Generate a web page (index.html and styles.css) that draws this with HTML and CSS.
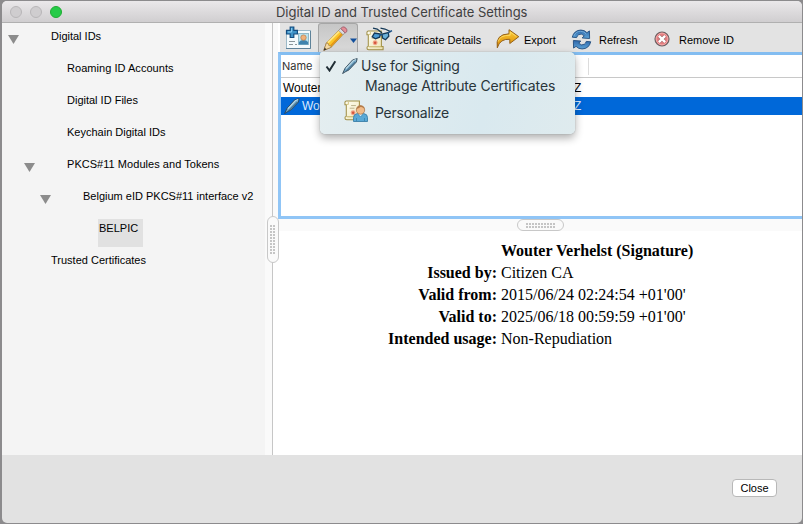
FILE: index.html
```html
<!DOCTYPE html>
<html lang="en">
<head>
<meta charset="utf-8">
<title>Digital ID and Trusted Certificate Settings</title>
<link rel="stylesheet" href="styles.css">
</head>
<body>
<svg class="defs" width="0" height="0">
  <defs>
    <linearGradient id="gold" x1="0" y1="0" x2="0" y2="1"><stop offset="0" stop-color="#ffcf35"/><stop offset="1" stop-color="#d58508"/></linearGradient>
    <linearGradient id="blue" x1="0" y1="0" x2="0" y2="1"><stop offset="0" stop-color="#2f68ac"/><stop offset="1" stop-color="#5da3d6"/></linearGradient>
    <linearGradient id="paper" x1="0" y1="0" x2="1" y2="1"><stop offset="0" stop-color="#fffef2"/><stop offset="1" stop-color="#efe5b4"/></linearGradient>
    <symbol id="pen" viewBox="0 0 16 16">
      <path d="M.6 15.6 3 10.3 10.6 1.9 15.2.6 14.4 4 7 11.9 3 14z" fill="#70a3c2" stroke="#2b3e4c" stroke-width=".8"/>
      <path d="M4 10.6 11.5 2.6 14 1.5" fill="none" stroke="#bfdce8" stroke-width="1.1"/>
      <path d="M4.4 13 13.4 4" stroke="#365c78" stroke-width=".9"/>
    </symbol>
    <symbol id="scroll" viewBox="0 0 20 22">
      <path d="M2.5 1H16.2V17.3H18V20.8H3Q1 20.6 1 18.8 1 17.2 2.4 17V5H1V2.4Q1.1 1 2.5 1z" fill="url(#paper)" stroke="#a08f45" stroke-width="1.1"/>
      <path d="M2.6 4.6h2V2" fill="none" stroke="#c8b668" stroke-width=".8"/>
      <path d="M3.2 17.6H17" stroke="#b9a652" stroke-width=".9"/>
      <path d="M7.5 5.8h5M6 8.6h5" stroke="#b9b08a"/>
      <circle cx="9.6" cy="13.3" r="2.6" fill="#f0a287"/><circle cx="9.6" cy="13.3" r="1.3" fill="#d4553a"/>
    </symbol>
  </defs>
</svg>
<div class="window">
  <header class="titlebar">
    <div class="lights"><i class="light"></i><i class="light"></i><i class="light green"></i></div>
    <h1 class="title">Digital ID and Trusted Certificate Settings</h1>
  </header>
  <main class="body">
    <nav class="sidebar">
      <div class="node"><i class="arrow"></i><span>Digital IDs</span></div>
      <div class="node child"><span class="wide">Roaming ID Accounts</span></div>
      <div class="node child"><span>Digital ID Files</span></div>
      <div class="node child"><span>Keychain Digital IDs</span></div>
      <div class="node level1"><i class="arrow"></i><span class="wide">PKCS#11 Modules and Tokens</span></div>
      <div class="node level2"><i class="arrow"></i><span>Belgium eID PKCS#11 interface v2</span></div>
      <div class="node leaf"><span class="selected">BELPIC</span></div>
      <div class="node root"><span>Trusted Certificates</span></div>
    </nav>
    <div class="splitter"><span class="grip vertical"><i></i></span></div>
    <section class="content">
      <div class="toolbar">
        <button class="tool add" aria-label="Add ID">
          <svg width="27" height="24" viewBox="0 0 27 24">
            <rect x="1.5" y="4.5" width="24" height="18" fill="#f4fafc" stroke="#9cb9c8"/>
            <path d="M1 22.5h24.5V5" fill="none" stroke="#5e8299"/>
            <rect x="13.5" y="7.5" width="10" height="11" fill="#b8e3ef" stroke="#8fb9c8"/>
            <path d="M14 18.5v-2.5q1.5-2 4.5-2t4.5 2v2.5z" fill="#3f83ae"/>
            <circle cx="18.5" cy="11.6" r="2.7" fill="#efb17a" stroke="#b87b48" stroke-width=".7"/>
            <path d="M4 15.5h6M4 18.5h4M10 18.5h2" stroke="#8a969b"/>
            <path d="M5.2 1h3.6v3.4h3.6V8H8.8v3.5H5.2V8H1.5V4.4h3.7z" fill="#3e93c8" stroke="#134d80" stroke-width="1.2"/>
            <path d="M6.6 2v4H2.8" fill="none" stroke="#8cceef"/>
          </svg>
        </button>
        <button class="tool edit" aria-label="Edit">
          <svg width="38" height="29" viewBox="0 0 38 29">
            <path d="M4.8 26.3 7.4 19 20.8 5.4 25 9.4 12.2 23.3z" fill="#fbc425" stroke="#a3772a" stroke-width=".7"/>
            <path d="M8.9 18.7 21.3 6.4" stroke="#ffe580" stroke-width="1.8"/>
            <path d="M11.8 21.8 24 8.8" stroke="#e49318" stroke-width="1.6"/>
            <path d="m4.8 26.3 2.6-7.3 1.9.6.5 1.9 2 .4.4 1.4z" fill="#f4d9a4" stroke="#8e7044" stroke-width=".6"/>
            <path d="m4.7 26.5 1-2.9 1.8 2z" fill="#36312b"/>
            <path d="m19.6 6.4 1.9-1.8 4.4 4.2-1.9 2z" fill="#d9dce0" stroke="#848087" stroke-width=".6"/>
            <path d="m21.8 4.4 1.5-1.2q1.7-1 3.5.8t1 3.6l-1.6 1.4z" fill="#e58d96" stroke="#8b4b5b" stroke-width=".7"/>
            <path d="M31 14.5h7l-3.5 4.5z" fill="#124f9c"/>
          </svg>
        </button>
        <button class="tool details">
          <svg width="28" height="24" viewBox="0 0 28 24">
            <use href="#scroll" x="1" y="3" width="19" height="21"/>
            <path d="M8 1.2 12.2 2 17 6M15.5 1.2 20 2 25.5 4.6" fill="none" stroke="#153957" stroke-width="1.3"/>
            <path d="M7.2 9.8 9.5 6 15.5 7 14.6 10.2 10.5 11.8z" fill="#4c9cd2" stroke="#153957" stroke-width="1.3"/>
            <path d="M17 7.2 23.3 5.5 23.8 9.2 20.5 12.7 17.6 11z" fill="#69afd9" stroke="#153957" stroke-width="1.3"/>
            <path d="m15 7.8 2.5-.2M23 5.8l4-2.2" stroke="#174e86" stroke-width="1.4"/>
          </svg>
          <span>Certificate Details</span>
        </button>
        <button class="tool export">
          <svg width="24" height="22" viewBox="0 0 24 22">
            <path d="M1.3 19.8Q-1 6.2 13 5.8V1.7l9.8 7-9 6.8v-4.2Q4 10.5 1.3 19.8z" fill="url(#gold)" stroke="#94611b"/>
            <path d="M2.2 13.5q1.5-6.4 12-6.3V4l6.2 4.5" fill="none" stroke="#ffe272" stroke-width=".8"/>
          </svg>
          <span>Export</span>
        </button>
        <button class="tool refresh">
          <svg width="22" height="22" viewBox="0 0 22 22">
            <path d="M1.3 8.6Q3.2 1.3 10.3 1.1q4 0 6.4 2.7l2.6-1.8.2 8-7.8-.6 2.2-2.3Q10.8 4.2 8 6 6.4 7 5.9 9z" fill="url(#blue)" stroke="#1d487a" stroke-width=".9"/>
            <path d="M20.7 13.4Q18.8 20.7 11.7 20.9q-4 0-6.4-2.7l-2.6 1.8-.2-8 7.8.6-2.2 2.3q3 2.9 5.8 1.1 1.6-1 2.1-3z" fill="url(#blue)" stroke="#1d487a" stroke-width=".9"/>
            <path d="M3 7.4q2-5 7-5 4.2 0 6 3" fill="none" stroke="#82b9df" stroke-width=".8"/>
          </svg>
          <span>Refresh</span>
        </button>
        <button class="tool remove">
          <svg width="16" height="16" viewBox="0 0 16 16">
            <circle cx="8" cy="8" r="7" fill="#e47e80" stroke="#6b6264" stroke-width="1.2"/>
            <circle cx="8" cy="8" r="5.8" fill="none" stroke="#f2a5a5"/>
            <path d="m5.2 5.2 5.6 5.6m0-5.6-5.6 5.6" stroke="#9d6466" stroke-width="3.6"/>
            <path d="m4.9 4.9 6.2 6.2m0-6.2-6.2 6.2" stroke="#fff" stroke-width="2.4"/>
          </svg>
          <span>Remove ID</span>
        </button>
      </div>
      <div class="list">
        <div class="list-head"><span class="col">Name</span></div>
        <div class="row"><span class="name">Wouter</span><span class="tail">Z</span></div>
        <div class="row active"><span class="name"><svg width="16" height="16"><use href="#pen"/></svg>Wou</span><span class="tail">Z</span></div>
      </div>
      <div class="hsplit"><span class="grip horizontal"><i></i></span></div>
      <dl class="info">
        <dt></dt><dd><b>Wouter Verhelst (Signature)</b></dd>
        <dt>Issued by:</dt><dd>Citizen CA</dd>
        <dt>Valid from:</dt><dd>2015/06/24 02:24:54 +01'00'</dd>
        <dt>Valid to:</dt><dd>2025/06/18 00:59:59 +01'00'</dd>
        <dt>Intended usage:</dt><dd>Non-Repudiation</dd>
      </dl>
      <div class="menu">
        <div class="item signing">
          <svg width="12" height="12" viewBox="0 0 12 12"><path d="m1.5 6.5 3 4L10.3 1.2" fill="none" stroke="#222f36" stroke-width="2"/></svg>
          <svg class="pen" width="16" height="16"><use href="#pen"/></svg>
          <span class="m1">Use for Signing</span>
        </div>
        <div class="item attrs"><span class="m2">Manage Attribute Certificates</span></div>
        <div class="item personal">
          <svg width="26" height="23" viewBox="0 0 26 23">
            <use href="#scroll" x="0" y="0" width="19" height="21"/>
            <path d="M9.5 21.5v-4q0-3.5 4-4h6q4 .5 4 4v4z" fill="#5aa9d6" stroke="#3b7fa8" stroke-width=".9"/>
            <path d="m13.5 13.5 3 3.5 3-3.5M12.5 18v3M20.5 18v3" fill="#d5edf8" stroke="#347ba5" stroke-width=".7"/>
            <circle cx="16.5" cy="10" r="4.2" fill="#f1bb88" stroke="#a9784f" stroke-width=".8"/>
            <path d="M12.4 9q1-4 4.5-3.6 3.5.2 3.7 3.6-2.5-2.4-4-2-2 1.4-4.2 2z" fill="#b57c49"/>
          </svg>
          <span class="m3">Personalize</span>
        </div>
      </div>
    </section>
  </main>
  <footer class="footer"><button class="close">Close</button></footer>
</div>
</body>
</html>
```

FILE: styles.css
```css
* { box-sizing: border-box; }
body {
  margin: 0;
  width: 803px;
  height: 524px;
  padding: 1px 1px 1px 2px;
  overflow: hidden;
  background: #8c8b8d;
  font-family: "Liberation Sans", sans-serif;
  font-size: 11px;
  color: #000;
}
.defs { position: absolute; }
svg { display: block; flex: none; }
button { margin: 0; border: 0; background: none; font: inherit; color: inherit; }
.window {
  display: flex;
  flex-direction: column;
  height: 522px;
  border-radius: 5px;
  overflow: hidden;
  background: #e2e2e2;
}
.titlebar {
  display: grid;
  grid-template-columns: 274px 1fr;
  height: 22px;
  align-items: center;
  background: linear-gradient(#eae8ea, #d0ced0);
  border-bottom: 1px solid #b0b0b0;
}
.lights { display: flex; gap: 8px; padding-left: 8px; }
.light { width: 12px; height: 12px; border-radius: 50%; background: #cfcdcf; border: 1px solid #b8b6b8; }
.green { background: #26cb48; border-color: #1eac32; }
.title {
  margin: 1px 0 0;
  font: 400 13px/20px Inter, sans-serif;
  letter-spacing: -.04px;
  color: #404040;
  white-space: nowrap;
}
.body { display: flex; height: 432px; }
.sidebar { width: 263px; background: #f4f4f4; }
.node {
  display: flex;
  height: 32px;
  padding: 6px 0 0 6px;
  line-height: 14px;
  white-space: nowrap;
}
.wide { letter-spacing: .04px; }
.arrow {
  width: 11px;
  height: 9px;
  margin: 6px 32px 0 0;
  background: #8c8c8c;
  clip-path: polygon(0 0, 100% 0, 50% 100%);
}
.child { padding-left: 65px; }
.level1 { padding-left: 22px; }
.level2 { padding-left: 38px; }
.leaf { padding: 3px 0 0 96px; }
.root { padding-left: 49px; }
.selected { height: 28px; width: 45px; margin-top: 1px; padding: 2px 0 0 1px; background: #e1e1e1; }
.splitter {
  display: flex;
  justify-content: center;
  align-items: center;
  width: 8px;
  background: #fafafa;
  border-right: 1px solid #c6c6c6;
}
.grip {
  position: relative;
  z-index: 2;
  display: flex;
  align-items: center;
  justify-content: center;
  flex: none;
  background: #fafafa;
  border: 1px solid #c8c8c8;
}
.grip i {
  background-image: linear-gradient(90deg, transparent 2px, #fafafa 2px), linear-gradient(#fafafa 1px, #c5c5c5 1px);
  background-size: 3px 3px;
}
.vertical { width: 12px; height: 47px; left: 4px; border-radius: 6px; }
.vertical i { width: 5px; height: 30px; }
.horizontal { width: 47px; height: 12px; border-radius: 6px; }
.horizontal i { width: 29px; height: 6px; }
.content { position: relative; display: flex; flex-direction: column; width: 529px; background: #fff; }
.content::before { content: ""; position: absolute; width: 5px; height: 208px; background: #fafafa; }
.toolbar { display: flex; height: 29px; margin-left: 7px; background: #e3e3e3; }
.tool { display: flex; align-items: center; padding: 0; line-height: 14px; white-space: nowrap; }
.tool span { padding-top: 5px; }
.add { width: 38px; padding: 3px 0 0 5px; align-items: flex-start; }
.edit { width: 40px; background: linear-gradient(#c6c6c6, #dadada); border: 1px solid #a6a6a6; border-bottom: 0; border-radius: 3px 3px 0 0; }
.details { width: 136px; padding-left: 7px; gap: 2px; }
.details svg { margin-top: 2px; }
.export { width: 78px; padding-left: 2px; gap: 4px; }
.export svg { margin-top: 3px; }
.refresh { width: 82px; gap: 6px; }
.refresh svg { width: 21px; height: 21px; margin: 3px 1px 0 -1px; }
.remove { gap: 9px; }
.remove svg { margin-top: 2px; }
.list { height: 167px; margin-left: 5px; border: 3px solid #90c5f6; border-top-color: #83bdf1; border-right: 0; background: #fff; font-size: 12px; }
.list-head { display: flex; height: 23px; border-bottom: 1px solid #c8c8c8; font: 11px/22px Inter, sans-serif; color: #333; }
.col { width: 308px; height: 17px; margin-top: 3px; padding-left: 1px; line-height: 17px; border-right: 1px solid #dcdcdc; }
.row { display: flex; height: 19px; line-height: 20px; }
.row .name { display: flex; width: 293px; padding-left: 2px; }
.active { height: 18px; line-height: 19px; background: #0068d9; color: #dcebff; }
.active svg { margin: 1px 2px 0 1px; }
.hsplit { height: 12px; display: flex; align-items: center; padding-left: 244px; background: #fafafa; }
.info {
  display: grid;
  grid-template-columns: 224px 1fr;
  column-gap: 4px;
  grid-auto-rows: 22px;
  margin: 0;
  padding-top: 9px;
  font: 16px/22px "Liberation Serif", serif;
  white-space: nowrap;
}
.info dt { text-align: right; font-weight: 700; }
.info dd { margin: 0; }
.menu {
  position: absolute;
  left: 47px;
  top: 29px;
  width: 255px;
  height: 82px;
  padding-top: 4px;
  border-radius: 2px 5px 5px 5px;
  background: linear-gradient(105deg, #e5eef0, #d9e9ef 65%, #dfebee);
  box-shadow: 0 0 1px #708086, 0 4px 9px rgba(0, 0, 0, .32);
  font: 14px/20px Inter, sans-serif;
  color: #29353b;
  white-space: nowrap;
}
.m1 { letter-spacing: -.2px; }
.m2 { letter-spacing: -.14px; }
.m3 { letter-spacing: -.25px; }
.item { display: flex; align-items: center; height: 20px; }
.signing { padding-left: 5px; }
.pen { margin: 0 3px 0 5px; }
.attrs { padding-left: 45px; }
.personal { height: 33px; padding-left: 24px; gap: 5px; }
.personal svg { margin-top: -2px; }
.footer { display: flex; flex: 1; justify-content: flex-end; align-items: flex-start; padding: 24px 25px 0 0; }
.close { width: 45px; height: 18px; padding: 0; line-height: 16px; border: 1px solid #b8b8b8; border-radius: 4px; background: #fff; }
```
